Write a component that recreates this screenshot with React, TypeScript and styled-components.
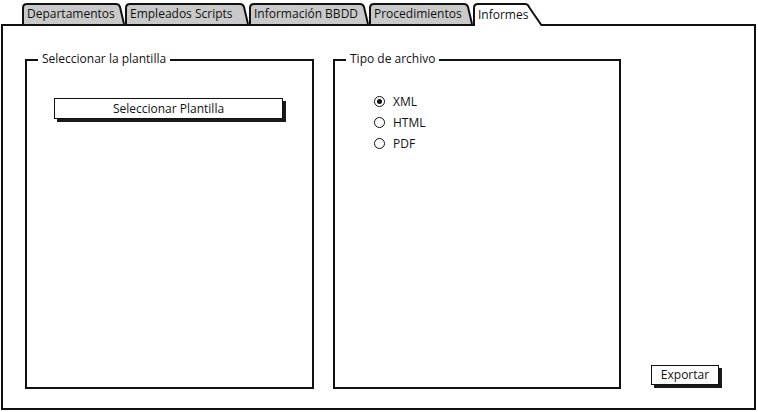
import React from 'react';
import styled, { createGlobalStyle } from 'styled-components';

const Global = createGlobalStyle`
  html, body { margin: 0; padding: 0; background: #fff; }
  body {
    font-family: "Open Sans", "Liberation Sans", sans-serif;
    font-size: 12px;
    color: #111;
  }
`;

const Page = styled.div`
  width: 758px;
  height: 412px;
  box-sizing: border-box;
  padding: 3px 0 0 1px;
  display: flex;
  flex-direction: column;
`;

const TabBar = styled.div`
  display: flex;
  align-items: flex-start;
  padding-left: 21px;
  height: 23px;
  margin-bottom: -2px;
  position: relative;
  z-index: 1;
`;

const TabItem = styled.div<{ $w: number; $active?: boolean }>`
  position: relative;
  width: ${(p) => p.$w}px;
  height: ${(p) => (p.$active ? 23 : 21)}px;
  flex: none;
  box-sizing: border-box;
  padding: ${(p) => (p.$active ? '4px 0 0 5px' : '3px 0 0 5px')};
  line-height: 16px;
  white-space: nowrap;
`;

const TabSvg = styled.svg`
  position: absolute;
  left: 0;
  top: 0;
`;

const TabLabel = styled.span`
  position: relative;
`;

const Panel = styled.div`
  width: 755px;
  height: 386px;
  box-sizing: border-box;
  border: 2px solid #111;
  padding: 33px 0 19px 22px;
  display: flex;
`;

const Group = styled.div<{ $w: number }>`
  position: relative;
  width: ${(p) => p.$w}px;
  box-sizing: border-box;
  border: 2px solid #111;
  flex: none;
`;

const GroupGap = styled.div`
  width: 19px;
  flex: none;
`;

const Legend = styled.span`
  position: absolute;
  top: -10px;
  left: 11px;
  padding: 0 4px;
  background: #fff;
  line-height: 16px;
  white-space: nowrap;
`;

const SketchButton = styled.div<{ $w: number; $h: number }>`
  width: ${(p) => p.$w}px;
  height: ${(p) => p.$h}px;
  box-sizing: border-box;
  border: 1.5px solid #111;
  background: #fff;
  box-shadow: 3px 3px 0 #1a1a1a;
  display: flex;
  align-items: center;
  justify-content: center;
  line-height: 1;
`;

const GroupBody = styled.div<{ $pt: number; $pl: number }>`
  padding: ${(p) => p.$pt}px 0 0 ${(p) => p.$pl}px;
`;

const RadioList = styled.div`
  display: flex;
  flex-direction: column;
`;

const RadioRow = styled.div`
  display: flex;
  align-items: center;
  height: 21px;
  gap: 8px;
`;

const RadioCircle = styled.span<{ $on?: boolean }>`
  width: 11px;
  height: 11px;
  box-sizing: border-box;
  border: 1.6px solid #111;
  border-radius: 50%;
  display: flex;
  align-items: center;
  justify-content: center;
  &::after {
    content: '';
    display: ${(p) => (p.$on ? 'block' : 'none')};
    width: 5px;
    height: 5px;
    border-radius: 50%;
    background: #111;
  }
`;

const ActionColumn = styled.div`
  flex: 1;
  display: flex;
  align-items: flex-end;
  justify-content: center;
  padding: 0 5px 4px 0;
`;

type TabDef = { label: string; w: number; active?: boolean };

const tabs: TabDef[] = [
  { label: 'Departamentos', w: 103 },
  { label: 'Empleados Scripts', w: 124 },
  { label: 'Información BBDD', w: 120 },
  { label: 'Procedimientos', w: 104 },
  { label: 'Informes', w: 70, active: true },
];

function Tab({ label, w, active }: TabDef) {
  const h = active ? 23 : 21;
  const slant = active ? 14 : 5;
  const d = `M1 ${h} L1 5 Q1 1 5 1 L${w - slant - 4} 1 Q${w - slant - 1} 1 ${w - slant} 4 L${w - 1} ${h}`;
  return (
    <TabItem $w={w} $active={active}>
      <TabSvg width={w} height={h} viewBox={`0 0 ${w} ${h}`}>
        <path d={d} fill={active ? '#fff' : '#c9c9c9'} stroke="#111" strokeWidth={2} strokeLinejoin="round" />
      </TabSvg>
      <TabLabel>{label}</TabLabel>
    </TabItem>
  );
}

export default function App() {
  return (
    <>
      <Global />
      <Page>
        <TabBar>
          {tabs.map((t) => (
            <Tab key={t.label} {...t} />
          ))}
        </TabBar>
        <Panel>
          <Group $w={289}>
            <Legend>Seleccionar la plantilla</Legend>
            <GroupBody $pt={37} $pl={27}>
              <SketchButton $w={229} $h={21}>Seleccionar Plantilla</SketchButton>
            </GroupBody>
          </Group>
          <GroupGap />
          <Group $w={288}>
            <Legend>Tipo de archivo</Legend>
            <GroupBody $pt={30} $pl={39}>
              <RadioList>
                <RadioRow>
                  <RadioCircle $on />
                  XML
                </RadioRow>
                <RadioRow>
                  <RadioCircle />
                  HTML
                </RadioRow>
                <RadioRow>
                  <RadioCircle />
                  PDF
                </RadioRow>
              </RadioList>
            </GroupBody>
          </Group>
          <ActionColumn>
            <SketchButton $w={68} $h={20}>Exportar</SketchButton>
          </ActionColumn>
        </Panel>
      </Page>
    </>
  );
}
